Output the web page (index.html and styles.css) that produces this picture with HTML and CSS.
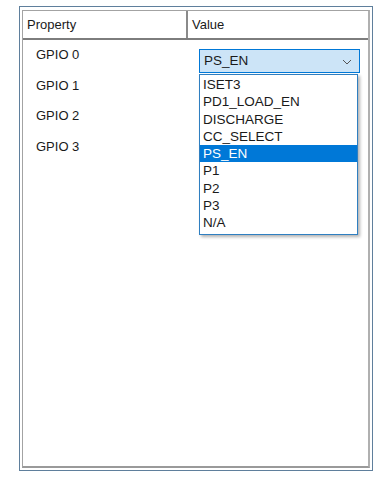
FILE: index.html
```html
<!DOCTYPE html>
<html lang="en">
<head>
  <meta charset="UTF-8" />
  <title>GPIO Properties</title>
  <link rel="stylesheet" href="styles.css">
</head>
<body>
  <div class="frame">
    <div class="grid">
      <div class="head">
        <div class="head-cell prop">Property</div>
        <div class="head-cell">Value</div>
      </div>

      <div class="row">
        <div class="name">GPIO 0</div>
        <div class="value">
          <div class="combo">
            <span>PS_EN</span>
            <svg class="chev" width="10" height="6" viewBox="0 0 10 6">
              <path d="M1 1 L5 5 L9 1" fill="none" stroke="#555" stroke-width="1"/>
            </svg>
            <ul class="list">
              <li>ISET3</li>
              <li>PD1_LOAD_EN</li>
              <li>DISCHARGE</li>
              <li>CC_SELECT</li>
              <li class="sel">PS_EN</li>
              <li>P1</li>
              <li>P2</li>
              <li>P3</li>
              <li>N/A</li>
            </ul>
          </div>
        </div>
      </div>
      <div class="row"><div class="name">GPIO 1</div><div class="value"></div></div>
      <div class="row"><div class="name">GPIO 2</div><div class="value"></div></div>
      <div class="row"><div class="name">GPIO 3</div><div class="value"></div></div>
    </div>
  </div>
</body>
</html>
```

FILE: styles.css
```css
body {
  margin: 0;
  background: #ffffff;
  font-family: "Liberation Sans", Arial, sans-serif;
  color: #1a1a1a;
}

.frame {
  margin: 6px 0 0 19px;
  width: 348px;
  height: 458px;
  border: 1px solid #5f7f9c;
  padding: 3px 2px 2px 2px;
}

.grid {
  height: 455px;
  border: 1px solid #a3a3a3;
  border-bottom: 2px solid #9a9a9a;
  border-right: 2px solid #b0b0b0;
}

.head {
  display: grid;
  grid-template-columns: 165px 1fr;
  height: 27px;
  border-bottom: 2px solid #7d7d7d;
}

.head-cell {
  font-size: 13px;
  line-height: 27px;
  padding-left: 4px;
}

.head-cell.prop {
  border-right: 2px solid #8a8a8a;
}

.row {
  display: grid;
  grid-template-columns: 166px 1fr;
  height: 30.5px;
}

.name {
  font-size: 13px;
  padding: 7px 0 0 13px;
}

.value {
  padding: 9px 0 0 10px;
}

.combo {
  position: relative;
  width: 155px;
  height: 22px;
  background: #cce4f7;
  border: 1px solid #0078d7;
  font-size: 13.5px;
  line-height: 22px;
  padding-left: 4px;
}

.chev {
  position: absolute;
  right: 7px;
  top: 9px;
}

.list {
  position: absolute;
  left: -1px;
  top: 24px;
  width: 157px;
  margin: 0;
  padding: 1px 0 3px 0;
  list-style: none;
  background: #ffffff;
  border: 1px solid #2f7fc1;
  box-shadow: 2px 2px 3px rgba(0, 0, 0, 0.3);
  z-index: 2;
}

.list li {
  height: 17.25px;
  line-height: 17px;
  padding-left: 3px;
  font-size: 13.5px;
}

.list li.sel {
  background: #0078d7;
  color: #ffffff;
}
```
